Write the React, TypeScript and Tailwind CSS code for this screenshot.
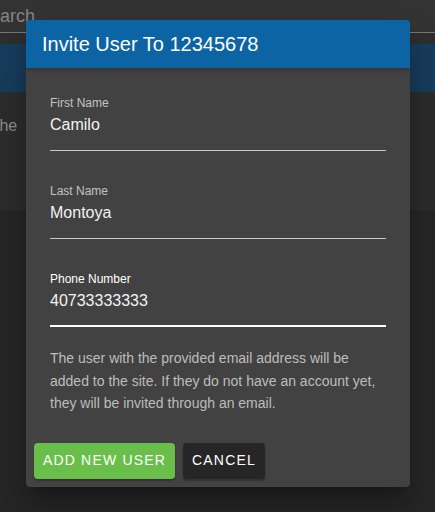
import { useState } from 'react'

interface FieldProps {
  label: string
  value: string
  focused?: boolean
  onChange: (value: string) => void
}

function Field({ label, value, focused, onChange }: FieldProps) {
  return (
    <div className="flex flex-col">
      <label className={`text-[12px] leading-[14px] ${focused ? 'text-white' : 'text-[#c2c2c2]'}`}>
        {label}
      </label>
      <input
        value={value}
        onChange={(e) => onChange(e.target.value)}
        className={`mt-[5px] bg-transparent text-[16px] leading-[20px] text-[#f2f2f2] outline-none ${
          focused ? 'pb-[14px] border-b-2 border-white' : 'pb-[15px] border-b border-[#c8c8c8]'
        }`}
      />
    </div>
  )
}

export default function App() {
  const [firstName, setFirstName] = useState('Camilo')
  const [lastName, setLastName] = useState('Montoya')
  const [phone, setPhone] = useState('40733333333')

  return (
    <div
      className="relative h-[512px] w-[435px] overflow-hidden bg-[#262626]"
      style={{ fontFamily: '"Liberation Sans", Arial, sans-serif' }}
    >
      {/* page behind the backdrop */}
      <div className="flex h-[32px] items-center overflow-hidden bg-[#333333]">
        <span className="-ml-[22px] text-[18px] text-[#858585]">Search</span>
      </div>
      <div className="h-px bg-[#777777]" />
      <div className="h-[11px] bg-[#2e2e2e]" />
      <div className="h-[48px] bg-[#173c5c]" />
      <div className="h-[118px] overflow-hidden bg-[#2c2c2c] pt-[22px]">
        <span className="-ml-[5px] text-[16px] text-[#8e8e8e]">the</span>
      </div>

      {/* invite dialog */}
      <div className="absolute left-[26px] top-[20px] w-[384px] overflow-hidden rounded-[4px] bg-[#424242] shadow-[0_11px_15px_-7px_rgba(0,0,0,0.3),0_24px_38px_3px_rgba(0,0,0,0.2)]">
        <div className="flex h-[48px] items-center bg-[#0d64a4] px-4 shadow-[0_2px_4px_rgba(0,0,0,0.25)]">
          <h2 className="text-[20px] text-white">Invite User To 12345678</h2>
        </div>
        <div className="flex flex-col gap-[33px] px-6 pt-[28px]">
          <Field label="First Name" value={firstName} onChange={setFirstName} />
          <Field label="Last Name" value={lastName} onChange={setLastName} />
          <Field label="Phone Number" value={phone} onChange={setPhone} focused />
        </div>
        <p className="px-6 pt-[20px] text-[14px] leading-[22.5px] text-[#bdbdbd]">
          The user with the provided email address will be added to the site. If they do not have
          an account yet, they will be invited through an email.
        </p>
        <div className="flex gap-2 px-2 pb-2 pt-[28px]">
          <button className="h-[36px] w-[141px] rounded-[4px] bg-[#6abf4b] text-[14px] font-medium uppercase tracking-[0.085em] text-white shadow-[0_2px_2px_rgba(0,0,0,0.25)]">
            Add New User
          </button>
          <button className="h-[36px] w-[82px] rounded-[4px] bg-[#262626] text-[14px] font-medium uppercase tracking-[0.085em] text-white shadow-[0_2px_2px_rgba(0,0,0,0.25)]">
            Cancel
          </button>
        </div>
      </div>
    </div>
  )
}
